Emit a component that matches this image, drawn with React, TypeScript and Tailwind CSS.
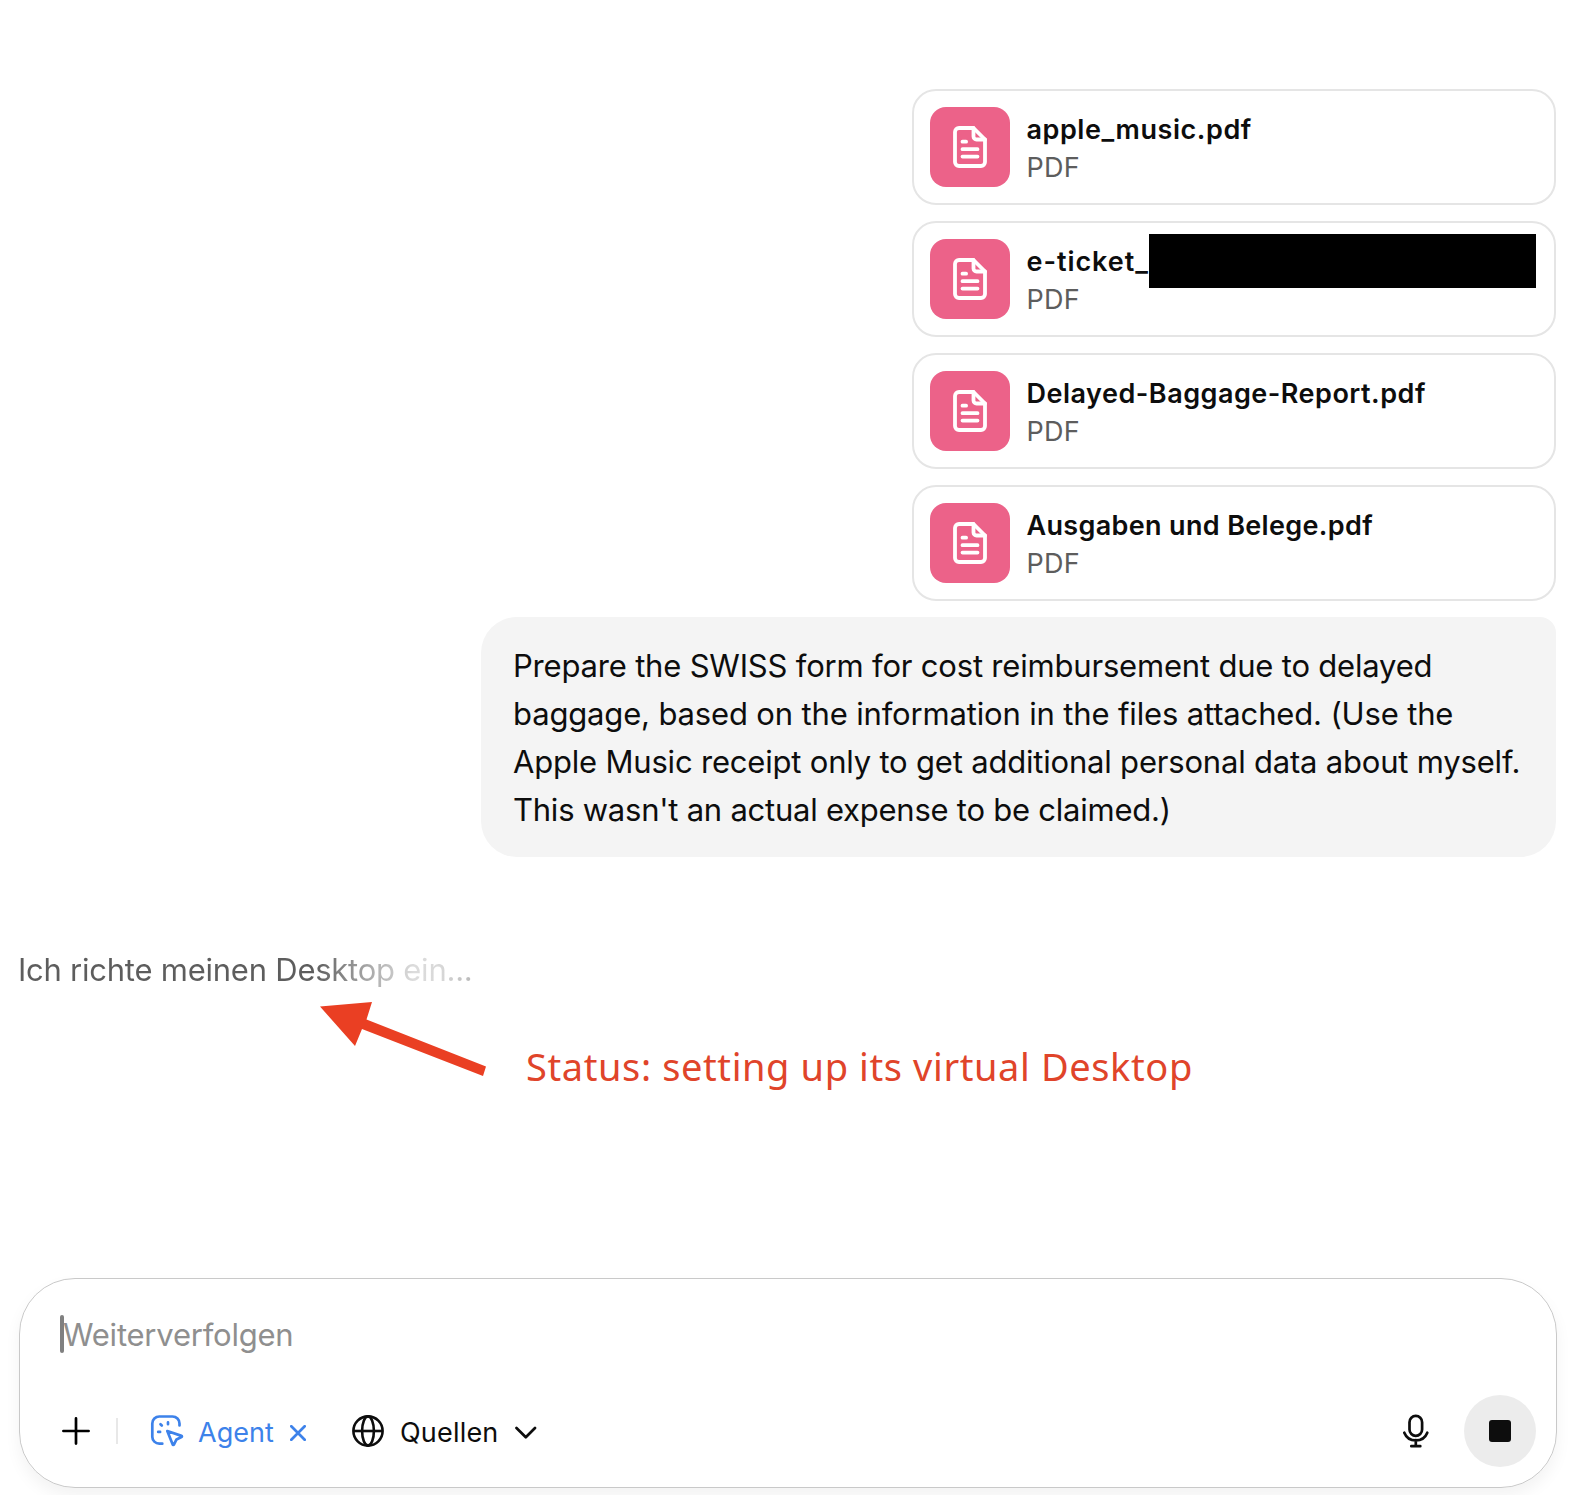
const files = [
  { name: 'apple_music.pdf', tracking: 'tracking-[0.55px]', redacted: false },
  { name: 'e-ticket_', tracking: 'tracking-[0.95px]', redacted: true },
  { name: 'Delayed-Baggage-Report.pdf', tracking: 'tracking-[0.5px]', redacted: false },
  { name: 'Ausgaben und Belege.pdf', tracking: 'tracking-[0.34px]', redacted: false },
];

const message = [
  { text: 'Prepare the SWISS form for cost reimbursement due to delayed', tracking: 'tracking-[-0.19px]' },
  { text: 'baggage, based on the information in the files attached. (Use the', tracking: 'tracking-[-0.155px]' },
  { text: 'Apple Music receipt only to get additional personal data about myself.', tracking: 'tracking-[-0.195px]' },
  { text: "This wasn't an actual expense to be claimed.)", tracking: 'tracking-[-0.24px]' },
];

function DocumentIcon() {
  return (
    <svg width="34" height="42" viewBox="0 0 34 42" fill="none" stroke="#fff" strokeWidth="3.8" strokeLinejoin="round" strokeLinecap="round">
      <path d="M20.500 2H6a4 4 0 0 0-4 4v30a4 4 0 0 0 4 4h22a4 4 0 0 0 4-4V13.500z" />
      <path d="M20.500 2v8.500a3 3 0 0 0 3 3H32" />
      <path d="M9.500 15.700h3.600M9.500 23.200h15M9.500 30.600h15" />
    </svg>
  );
}

function AgentIcon() {
  return (
    <svg width="34" height="34" viewBox="0 0 34 34" fill="none" stroke="currentColor" strokeWidth="2.700" strokeLinecap="round" strokeLinejoin="round">
      <path d="M29.500 11.500V9.500a7 7 0 0 0-7-7H9.300a7 7 0 0 0-7 7v13.200a7 7 0 0 0 7 7h3" />
      <path d="M17.300 17l14.200 4.900c.6.200.6.900 0 1.200l-5 2.300-2.600 5.200c-.3.600-1 .5-1.200-.1z" />
      <path d="M18 8.400v1.800M10.500 10.200l1.300 1.300M8.200 17.900h1.900" />
    </svg>
  );
}

function GlobeIcon() {
  return (
    <svg width="32" height="32" viewBox="0 0 32 32" fill="none" stroke="currentColor" strokeWidth="2.600">
      <circle cx="16" cy="16" r="14.600" />
      <ellipse cx="16" cy="16" rx="5.900" ry="14.600" />
      <path d="M1.400 16h29.200" />
    </svg>
  );
}

function MicIcon() {
  return (
    <svg width="28" height="34" viewBox="0 0 28 34" fill="none" stroke="currentColor" strokeWidth="2.700" strokeLinecap="round">
      <rect x="7.500" y="1.900" width="12.600" height="20" rx="6.300" />
      <path d="M2.300 18.700a12.400 12.400 0 0 0 23 0M13.800 26v6M9.300 32.200h9" />
    </svg>
  );
}

function Arrow() {
  return (
    <svg width="168" height="76" viewBox="0 0 168 76" fill="#ea3f23">
      <path d="M0 5.500 52 1 46.500 18.500 166 65.500 163 75 42 28 35 45z" />
    </svg>
  );
}

export default function App() {
  return (
    <div className="flex h-[1495px] w-[1573px] flex-col overflow-hidden bg-white font-['Inter',sans-serif] text-[#0d0d0d]">
      <div className="mr-[17px] flex flex-col items-end gap-4 pt-[89px]">
        {files.map((f) => (
          <div key={f.name} className="relative flex h-[116px] w-[644px] items-center gap-4 rounded-3xl border-2 border-[#e5e5e5] px-4">
            <div className="flex size-20 shrink-0 items-center justify-center rounded-2xl bg-[#ec6289]">
              <DocumentIcon />
            </div>
            <div className="pt-1 pl-[0.5px] text-[27px] leading-[38px] whitespace-nowrap">
              <div className={`font-semibold ${f.tracking}`}>{f.name}</div>
              <div className="tracking-[0.3px] text-[#5d5d5d]">PDF</div>
            </div>
            {f.redacted && <div className="absolute top-[11px] left-[235px] h-[54px] w-[387px] bg-black" />}
          </div>
        ))}
        <div className="h-60 w-[1075px] rounded-tl-[36px] rounded-tr-2xl rounded-br-[36px] rounded-bl-[36px] bg-[#f4f4f4] pt-[25px] pl-8 text-[31px] leading-[48px] whitespace-nowrap">
          {message.map((l) => (
            <div key={l.text} className={l.tracking}>{l.text}</div>
          ))}
        </div>
      </div>

      <div className="mt-[89px] ml-[18px] h-12 w-fit bg-[linear-gradient(90deg,#5d5d5d_0%,#5d5d5d_65%,#b4b4b4_79%,#dcdcdc_87%,#d8d8d8_93%,#b8b8b8_100%)] bg-clip-text text-[31px] leading-[48px] tracking-[-0.24px] whitespace-nowrap text-transparent">
        Ich richte meinen Desktop ein...
      </div>

      <div className="mt-[7px] ml-80 flex h-[92px] items-start">
        <Arrow />
        <div className="mt-[39px] ml-[38px] font-['Noto_Sans',sans-serif] text-[38px] leading-[52px] tracking-[0.6px] whitespace-nowrap text-[#e0442a]">
          Status: setting up its virtual Desktop
        </div>
      </div>

      <div className="mt-[185px] ml-[19px] flex h-[210px] w-[1538px] flex-col rounded-[56px] border border-[#c9c9c9] shadow-[0_8px_16px_rgba(0,0,0,0.05)]">
        <div className="mt-[31px] ml-10 flex h-12 items-center text-[31px] leading-[48px] tracking-[-0.22px] text-[#8f8f8f]">
          <div className="h-[38px] w-1 rounded-full bg-[#808080]" />
          <span className="-ml-px pt-0.5">Weiterverfolgen</span>
        </div>
        <div className="mt-[37px] flex h-[72px] items-center pr-5 pl-[42px] text-[27px]">
          <svg width="28" height="28" viewBox="0 0 28 28" fill="none" stroke="#000" strokeWidth="2.700" strokeLinecap="round">
            <path d="M14 1.400v25.200M1.400 14h25.200" />
          </svg>
          <div className="ml-[26px] h-[26px] w-0.5 bg-[#e8e8e8]" />
          <div className="ml-8 flex items-center text-[#3d82ea]">
            <AgentIcon />
            <span className="ml-[14px] w-[92px] pt-[5px]">Agent</span>
            <svg width="16" height="16" viewBox="0 0 16 16" className="mt-[3px]" fill="none" stroke="currentColor" strokeWidth="2.700" strokeLinecap="round">
              <path d="M1.300 1.300l13.400 13.400M14.700 1.300L1.300 14.700" />
            </svg>
          </div>
          <div className="ml-[46px] flex items-center">
            <GlobeIcon />
            <span className="ml-4 w-[115px] pt-[5px] tracking-[0.2px]">Quellen</span>
            <svg width="22" height="13" viewBox="0 0 22 13" className="mt-[3px]" fill="none" stroke="currentColor" strokeWidth="2.700" strokeLinecap="round" strokeLinejoin="round">
              <path d="M1.500 2l9.300 9.200L20 2" />
            </svg>
          </div>
          <div className="ml-auto flex items-center gap-[34px]">
            <MicIcon />
            <div className="flex size-[72px] items-center justify-center rounded-full bg-[#ececec]">
              <div className="size-[22px] rounded-[3px] bg-[#0d0d0d]" />
            </div>
          </div>
        </div>
      </div>
    </div>
  );
}
